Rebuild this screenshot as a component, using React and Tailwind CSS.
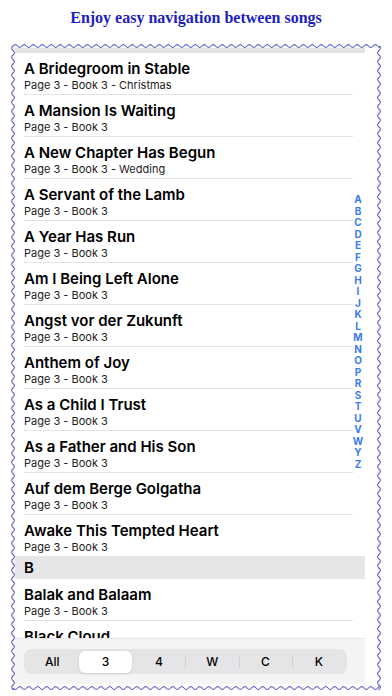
import React from 'react';

const songs = [
    { title: 'A Bridegroom in Stable', sub: 'Page 3 - Book 3 - Christmas' },
    { title: 'A Mansion Is Waiting', sub: 'Page 3 - Book 3' },
    { title: 'A New Chapter Has Begun', sub: 'Page 3 - Book 3 - Wedding' },
    { title: 'A Servant of the Lamb', sub: 'Page 3 - Book 3' },
    { title: 'A Year Has Run', sub: 'Page 3 - Book 3' },
    { title: 'Am I Being Left Alone', sub: 'Page 3 - Book 3' },
    { title: 'Angst vor der Zukunft', sub: 'Page 3 - Book 3' },
    { title: 'Anthem of Joy', sub: 'Page 3 - Book 3' },
    { title: 'As a Child I Trust', sub: 'Page 3 - Book 3' },
    { title: 'As a Father and His Son', sub: 'Page 3 - Book 3' },
    { title: 'Auf dem Berge Golgatha', sub: 'Page 3 - Book 3' },
    { title: 'Awake This Tempted Heart', sub: 'Page 3 - Book 3', last: true },
];

const songsB = [
    { title: 'Balak and Balaam', sub: 'Page 3 - Book 3' },
    { title: 'Black Cloud', sub: 'Page 3 - Book 3' },
];

const letters = 'ABCDEFGHIJKLMNOPRSTUVWYZ'.split('');
const tabs = ['All', '3', '4', 'W', 'C', 'K'];

// wavy outline drawn around the phone screen
function wavePath(w, h) {
    const step = 9;
    const amp = 1.4;
    let d = `M 2 2`;
    for (let x = 2; x < w - 2; x += step) {
        d += ` q ${step / 4} ${-amp * 2} ${step / 2} 0 t ${step / 2} 0`;
    }
    d += ` M ${w - 2} 2`;
    for (let y = 2; y < h - 2; y += step) {
        d += ` q ${amp * 2} ${step / 4} 0 ${step / 2} t 0 ${step / 2}`;
    }
    d += ` M 2 ${h - 2}`;
    for (let x = 2; x < w - 2; x += step) {
        d += ` q ${step / 4} ${amp * 2} ${step / 2} 0 t ${step / 2} 0`;
    }
    d += ` M 2 2`;
    for (let y = 2; y < h - 2; y += step) {
        d += ` q ${-amp * 2} ${step / 4} 0 ${step / 2} t 0 ${step / 2}`;
    }
    return d;
}

function SongRow({ song }) {
    return (
        <div className="pl-[9px] pr-[12px]">
            <div className={`pt-[7px] pb-[2px] ${song.last ? '' : 'border-b border-[#e2e2e4]'}`}>
                <div className="text-[15px] leading-[18px] font-semibold text-black">{song.title}</div>
                <div className="text-[11px] leading-[14px] text-[#1c1c1c]">{song.sub}</div>
            </div>
        </div>
    );
}

export default function App() {
    return (
        <div className="w-[392px] h-[696px] bg-white overflow-hidden" style={{ fontFamily: 'Inter, "Noto Sans", sans-serif' }}>
            <h1
                className="h-[44px] pt-[8px] text-center text-[16px] leading-[20px] font-bold text-[#1d1dc2]"
                style={{ fontFamily: '"Liberation Serif", serif' }}
            >
                Enjoy easy navigation between songs
            </h1>

            <div className="relative ml-[11px] w-[370px] h-[646px] pt-[4px] pl-[4px]">
                <svg className="absolute inset-0 pointer-events-none" width="370" height="646" viewBox="0 0 370 646">
                    <path d={wavePath(370, 646)} fill="none" stroke="#6262cf" strokeWidth="1.1" />
                </svg>

                <div className="relative w-[350px] h-[636px] flex flex-col overflow-hidden">
                    <div className="h-[5px] bg-[#e4e4e6] shrink-0" />
                    <div className="flex-1 overflow-hidden">
                        {songs.map((s) => (
                            <SongRow key={s.title} song={s} />
                        ))}
                        <div className="h-[23px] bg-[#e6e6e8] pl-[9px] pt-[1px] text-[15px] leading-[22px] font-semibold text-black">B</div>
                        {songsB.map((s) => (
                            <SongRow key={s.title} song={s} />
                        ))}
                    </div>
                    <div className="h-[46px] shrink-0 bg-[#f4f4f5] border-t border-[#e8e8ea] pl-[9px] pt-[10px]">
                        <div className="w-[323px] h-[25px] rounded-[7px] bg-[#e5e5e8] flex items-center p-[1.5px]">
                            {tabs.map((t, i) => (
                                <div key={t} className="relative flex-1 h-full flex items-center justify-center">
                                    {i > 2 && <div className="absolute left-0 top-[6px] h-[11px] w-px bg-[#cfcfd3]" />}
                                    {t === '3' ? (
                                        <div className="w-full h-full rounded-[6px] bg-white shadow-[0_1px_3px_rgba(0,0,0,0.12)] flex items-center justify-center text-[12px] font-medium text-black">
                                            {t}
                                        </div>
                                    ) : (
                                        <span className="text-[12px] font-medium text-black">{t}</span>
                                    )}
                                </div>
                            ))}
                        </div>
                    </div>

                    <div className="absolute right-[1px] top-[146px] w-[12px] flex flex-col items-center">
                        {letters.map((l) => (
                            <div key={l} className="h-[11.52px] leading-[11.52px] text-[10px] font-bold text-[#3b7ced]">
                                {l}
                            </div>
                        ))}
                    </div>
                </div>
            </div>
        </div>
    );
}
